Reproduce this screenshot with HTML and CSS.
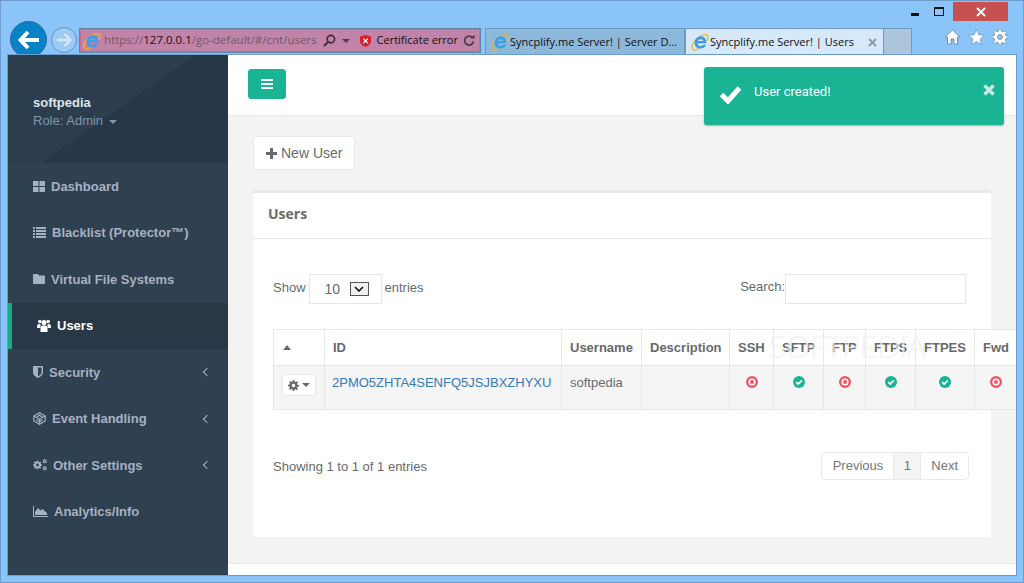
FILE: index.html
```html
<!DOCTYPE html>
<html lang="en">
  <head>
    <meta charset="UTF-8" />
    <title>Syncplify.me Server! | Users</title>
    <link rel="stylesheet" href="styles.css">
  </head>
  <body>
    <svg class="sprites" width="0" height="0">
      <symbol id="ie" viewBox="0 0 20 20">
        <path d="M2 18C-1 15 4 6 13 2.500C17 1 19 2 19 4.500C19 6 18.500 7.500 17.500 9" fill="none" stroke="#f0b429" stroke-width="1.400"/>
        <path d="M2 18C3.500 19.500 7 18.500 9.500 17" fill="none" stroke="#f0b429" stroke-width="1.400"/>
        <path d="M4 10C4.500 6 8 3.500 11 3.500C14.500 3.500 17.500 7 17 11.500H7.500V12.500C8.500 15 12 15.200 13.600 13H16.800C15 17.500 9.500 18.500 6 15.800C4.500 14.500 3.800 12.500 4 10ZM7.600 8.800H13.800C13 6.300 8.500 6.300 7.600 8.800Z" fill="#3a9fe6" fill-rule="evenodd"/>
      </symbol>
      <symbol id="ok" viewBox="0 0 12 12">
        <circle cx="6" cy="6" r="6" fill="#1ab394"/>
        <path d="M3.200 6.200L5.200 8L8.900 4.300" fill="none" stroke="#fff" stroke-width="1.700"/>
      </symbol>
      <symbol id="no" viewBox="0 0 12 12">
        <circle cx="6" cy="6" r="4.800" fill="#fff" stroke="#ed5565" stroke-width="2.400"/>
        <circle cx="6" cy="6" r="2" fill="#ed5565"/>
      </symbol>
      <symbol id="gear" viewBox="0 0 14 14">
        <path d="M6 0H8L8.400 2L9.700 2.600L11.500 1.500L12.800 3L11.600 4.600L12.100 6L14 6.300V8.200L12.100 8.500L11.500 9.900L12.600 11.500L11.200 12.900L9.600 11.700L8.300 12.200L8 14H6L5.700 12.200L4.300 11.600L2.700 12.700L1.300 11.300L2.400 9.700L1.900 8.400L0 8V6L1.900 5.700L2.500 4.300L1.400 2.700L2.800 1.300L4.400 2.400L5.700 1.900ZM7 4.800A2.200 2.200 0 1 0 7 9.200A2.200 2.200 0 1 0 7 4.800Z" fill-rule="evenodd"/>
      </symbol>
    </svg>

    <header class="toolbar">
      <div class="caption-buttons">
        <span class="cap-btn"><i class="cap-min"></i></span>
        <span class="cap-btn"><i class="cap-max"></i></span>
        <span class="cap-btn cap-close">
          <svg width="10" height="10" viewBox="0 0 10 10"><path d="M1 1L9 9M9 1L1 9" stroke="#fff" stroke-width="1.800"/></svg>
        </span>
      </div>
      <div class="nav-row">
        <span class="back-btn">
          <svg width="22" height="20" viewBox="0 0 22 20"><path d="M10 2L2.500 10L10 18M3 10H21" fill="none" stroke="#fff" stroke-width="4"/></svg>
        </span>
        <span class="forward-btn">
          <svg width="16" height="14" viewBox="0 0 16 14"><path d="M8.500 1L14.500 7L8.500 13M14 7H1" fill="none" stroke="#d8e8f6" stroke-width="2.400"/></svg>
        </span>
        <div class="address-bar">
          <svg class="ie-icon" width="18" height="18"><use href="#ie"/></svg>
          <span class="url">https://<b>127.0.0.1</b>/go-default/#/cnt/users</span>
          <svg class="addr-search" width="13" height="13" viewBox="0 0 14 14"><circle cx="8.500" cy="5.500" r="4" fill="none" stroke="#3d2a3a" stroke-width="1.800"/><path d="M5.500 8.500L1 13" stroke="#3d2a3a" stroke-width="2.200"/></svg>
          <span class="addr-caret"></span>
          <svg class="addr-shield" width="11" height="12" viewBox="0 0 11 12"><path d="M5.500 0L11 1.500V6C11 9 8 11 5.500 12C3 11 0 9 0 6V1.500Z" fill="#d6202a"/><path d="M3.300 3.700L7.700 8.100M7.700 3.700L3.300 8.100" stroke="#fff" stroke-width="1.300"/></svg>
          <span class="cert">Certificate error</span>
          <svg class="addr-refresh" width="12" height="13" viewBox="0 0 12 13"><path d="M9.800 4A4.500 4.500 0 1 0 10.500 7.500" fill="none" stroke="#4a3a46" stroke-width="1.700"/><path d="M7.500 4.500H11.500V0.500Z" fill="#4a3a46"/></svg>
        </div>
        <div class="tab">
          <svg width="18" height="18"><use href="#ie"/></svg>
          <span class="tab-title">Syncplify.me Server! | Server D...</span>
        </div>
        <div class="tab tab-active">
          <svg width="18" height="18"><use href="#ie"/></svg>
          <span class="tab-title">Syncplify.me Server! | Users</span>
          <svg class="tab-close" width="9" height="9" viewBox="0 0 9 9"><path d="M1 1L8 8M8 1L1 8" stroke="#8b9aa8" stroke-width="2"/></svg>
        </div>
        <div class="tab-new"></div>
        <div class="tools">
          <svg width="17" height="16" viewBox="0 0 17 16"><path d="M8.500 1L16 8H13.500V15H10V10H7V15H3.500V8H1Z" fill="#fff" stroke="#5e7f9e" stroke-width="0.800"/></svg>
          <svg width="17" height="16" viewBox="0 0 17 16"><path d="M8.500 0.500L10.800 5.800L16.500 6.300L12.200 10L13.500 15.500L8.500 12.600L3.500 15.500L4.800 10L0.500 6.300L6.200 5.800Z" fill="#fff" stroke="#5e7f9e" stroke-width="0.600"/></svg>
          <svg class="tools-gear" width="16" height="16"><use href="#gear"/></svg>
        </div>
      </div>
    </header>

    <div class="window">
      <aside class="sidebar">
        <div class="profile">
          <div class="profile-name">softpedia</div>
          <div class="profile-role">Role: Admin <span class="caret"></span></div>
        </div>
        <nav>
          <a class="nav-item" href="#">
            <svg width="12" height="11" viewBox="0 0 12 11"><path d="M0 0H5.500V5H0ZM6.500 0H12V5H6.500ZM0 6H5.500V11H0ZM6.500 6H12V11H6.500Z"/></svg>
            Dashboard
          </a>
          <a class="nav-item" href="#">
            <svg width="13" height="11" viewBox="0 0 13 11"><path d="M0 0H2V2H0ZM3 0H13V2H3ZM0 3H2V5H0ZM3 3H13V5H3ZM0 6H2V8H0ZM3 6H13V8H3ZM0 9H2V11H0ZM3 9H13V11H3Z"/></svg>
            Blacklist (Protector™)
          </a>
          <a class="nav-item" href="#">
            <svg width="12" height="10" viewBox="0 0 12 10"><path d="M1 0H5L6 1.500H11A1 1 0 0 1 12 2.500V9A1 1 0 0 1 11 10H1A1 1 0 0 1 0 9V1A1 1 0 0 1 1 0Z"/></svg>
            Virtual File Systems
          </a>
          <a class="nav-item nav-active" href="#">
            <svg width="14" height="13" viewBox="0 0 14 13"><circle cx="2.800" cy="2.500" r="1.800"/><circle cx="11.200" cy="2.500" r="1.800"/><circle cx="7" cy="3.500" r="2.500"/><path d="M0 8C0 5.500 1 5 3.500 5L3.300 9H0ZM14 8C14 5.500 13 5 10.500 5L10.700 9H14ZM3.500 13V9C3.500 7 5 6.300 7 6.300C9 6.300 10.500 7 10.500 9V13Z"/></svg>
            Users
          </a>
          <a class="nav-item" href="#">
            <svg width="10" height="12" viewBox="0 0 10 12"><path fill-rule="evenodd" d="M0 0H10V6.500C10 9 7.500 11 5 12C2.500 11 0 9 0 6.500ZM5 1.500V10.300C6.800 9.400 8.500 8 8.500 6.500V1.500Z"/></svg>
            Security
            <span class="chevron"></span>
          </a>
          <a class="nav-item" href="#">
            <svg width="13" height="13" viewBox="0 0 13 13"><path d="M6.500 0.800L12.200 4V9L6.500 12.200L0.800 9V4ZM0.800 4L6.500 7L12.200 4M6.500 7V12.200M3.500 5.500L6.500 3L9.500 5.500M3.500 7.500L6.500 10L9.500 7.500" fill="none" stroke="currentColor" stroke-width="1.200"/></svg>
            Event Handling
            <span class="chevron"></span>
          </a>
          <a class="nav-item" href="#">
            <svg width="14" height="12" viewBox="0 0 14 12"><use href="#gear" width="9" height="9" y="1.500"/><use href="#gear" width="4.500" height="4.500" x="9.500"/><use href="#gear" width="4.500" height="4.500" x="9.500" y="7"/></svg>
            Other Settings
            <span class="chevron"></span>
          </a>
          <a class="nav-item" href="#">
            <svg width="15" height="11" viewBox="0 0 15 11"><path d="M0 0H1V10H15V11H0ZM2 9V6L5 2L7.500 4.500L9.500 3L14 7V9Z"/></svg>
            Analytics/Info
          </a>
        </nav>
      </aside>

      <main class="main">
        <div class="topbar">
          <button class="menu-btn" type="button">
            <svg width="12" height="10" viewBox="0 0 12 10"><path d="M0 0H12V2H0ZM0 4H12V6H0ZM0 8H12V10H0Z" fill="#fff"/></svg>
          </button>
        </div>

        <div class="content">
          <button class="new-user" type="button">
            <svg width="11" height="11" viewBox="0 0 11 11"><path d="M4 0H7V4H11V7H7V11H4V7H0V4H4Z" fill="#676a6c"/></svg>
            New User
          </button>

          <section class="panel">
            <h2 class="panel-title">Users</h2>
            <div class="panel-body">
              <div class="table-tools">
                <div class="length">
                  Show
                  <span class="length-select">10
                    <span class="select-arrow">
                      <svg width="10" height="6" viewBox="0 0 10 6"><path d="M1 1L5 5L9 1" fill="none" stroke="#111" stroke-width="1.600"/></svg>
                    </span>
                  </span>
                  entries
                </div>
                <label class="search">Search:<input type="text" /></label>
              </div>

              <table class="users">
                <thead>
                  <tr>
                    <th class="col-actions"><span class="sort-up"></span></th>
                    <th class="col-id">ID</th>
                    <th class="col-username">Username</th>
                    <th class="col-desc">Description</th>
                    <th class="col-ssh">SSH</th>
                    <th class="col-sftp">SFTP</th>
                    <th class="col-ftp">FTP</th>
                    <th class="col-ftps">FTPS</th>
                    <th class="col-ftpes">FTPES</th>
                    <th class="col-fwd">Fwd</th>
                  </tr>
                </thead>
                <tbody>
                  <tr>
                    <td>
                      <button class="row-menu" type="button">
                        <svg width="11" height="11"><use href="#gear"/></svg>
                        <span class="caret"></span>
                      </button>
                    </td>
                    <td class="cell-id"><a href="#">2PMO5ZHTA4SENFQ5JSJBXZHYXU</a></td>
                    <td>softpedia</td>
                    <td></td>
                    <td class="status"><svg width="12" height="12"><use href="#no"/></svg></td>
                    <td class="status"><svg width="12" height="12"><use href="#ok"/></svg></td>
                    <td class="status"><svg width="12" height="12"><use href="#no"/></svg></td>
                    <td class="status"><svg width="12" height="12"><use href="#ok"/></svg></td>
                    <td class="status"><svg width="12" height="12"><use href="#ok"/></svg></td>
                    <td class="status"><svg width="12" height="12"><use href="#no"/></svg></td>
                  </tr>
                </tbody>
              </table>

              <div class="table-foot">
                <div class="info">Showing 1 to 1 of 1 entries</div>
                <div class="pager">
                  <a class="prev" href="#">Previous</a>
                  <a class="current" href="#">1</a>
                  <a href="#">Next</a>
                </div>
              </div>
            </div>
          </section>
        </div>

        <div class="footer"></div>
      </main>
    </div>

    <!-- toast and watermark sit over the page -->
    <div class="toast">
      <svg class="toast-check" width="23" height="19" viewBox="0 0 23 19"><path d="M2.500 9.500L9 16L20.500 3" fill="none" stroke="#fff" stroke-width="5"/></svg>
      <span class="toast-text">User created!</span>
      <svg class="toast-close" width="12" height="12" viewBox="0 0 12 12"><path d="M1.500 1.500L10.500 10.500M10.500 1.500L1.500 10.500" stroke="#c6ece4" stroke-width="3.400"/></svg>
    </div>
    <div class="watermark">SOFTPEDIA</div>
  </body>
</html>
```

FILE: styles.css
```css
* {
  box-sizing: border-box;
}
html,
body {
  height: 100%;
}
body {
  margin: 0;
  height: 583px;
  overflow: hidden;
  display: flex;
  flex-direction: column;
  background-color: #8ac4f8;
  border: 1px solid #6c9ccb;
  font-family: "Liberation Sans", Arial, sans-serif;
  font-size: 14px;
  color: #676a6c;
  position: relative;
}
svg {
  flex: none;
}
.sprites {
  position: absolute;
}

/* browser chrome */
.toolbar {
  height: 54px;
  flex: none;
  position: relative;
  font-family: "Open Sans", "Noto Sans", sans-serif;
}
.caption-buttons {
  position: absolute;
  top: 1px;
  right: 15px;
  display: flex;
  align-items: stretch;
  height: 19px;
}
.cap-btn {
  width: 29px;
  display: flex;
  align-items: center;
  justify-content: center;
}
.cap-close {
  width: 55px;
  background-color: #c75050;
}
.cap-min {
  display: block;
  width: 8px;
  height: 3px;
  margin: 6px 0 0 11px;
  background-color: #111;
}
.cap-max {
  display: block;
  width: 10px;
  height: 9px;
  border: 1px solid #111;
  border-top-width: 2px;
}
.nav-row {
  position: absolute;
  left: 9px;
  top: 20px;
  right: 0;
  height: 36px;
  display: flex;
  align-items: flex-start;
}
.back-btn {
  width: 37px;
  height: 37px;
  border-radius: 50%;
  background-color: #0583c6;
  border: 1px solid #2a6c9c;
  display: flex;
  align-items: center;
  justify-content: center;
  flex: none;
}
.forward-btn {
  width: 26px;
  height: 26px;
  margin: 6px 2px 0 4px;
  border-radius: 50%;
  border: 1px solid #5f93c0;
  background-color: #9ccbf5;
  display: flex;
  align-items: center;
  justify-content: center;
  flex: none;
}
.address-bar {
  width: 402px;
  height: 25px;
  margin-top: 7px;
  margin-right: 4px;
  flex: none;
  display: flex;
  align-items: center;
  padding: 0 5px 0 3px;
  background-color: #c283a8;
  border: 1px solid #5f86a8;
  box-shadow: inset 0 0 0 1px #d0688f;
  font-size: 11.5px;
  color: #6c5a68;
}
.url {
  margin: 0 0 2px 3px;
  white-space: nowrap;
}
.url b {
  font-weight: 400;
  color: #111;
}
.addr-search {
  margin-left: 6px;
}
.addr-caret {
  margin-left: 6px;
  border-top: 4px solid #4d3d4a;
  border-left: 4px solid transparent;
  border-right: 4px solid transparent;
}
.addr-shield {
  margin-left: 10px;
}
.cert {
  margin: 0 0 2px 6px;
  font-size: 11px;
  color: #111;
  white-space: nowrap;
}
.addr-refresh {
  margin-left: auto;
}
.tab {
  width: 200px;
  height: 27px;
  margin-top: 7px;
  flex: none;
  display: flex;
  align-items: center;
  gap: 1px;
  padding-left: 5px;
  background-color: #8cb8dc;
  border: 1px solid #6a9bc4;
  border-bottom: none;
  font-size: 11px;
  color: #111;
  white-space: nowrap;
}
.tab-title {
  margin-bottom: 2px;
}
.tab-active {
  width: 199px;
  background-color: #d6e9fb;
}
.tab-close {
  margin-left: auto;
  margin-right: 6px;
}
.tab-new {
  width: 28px;
  height: 27px;
  margin-top: 7px;
  flex: none;
  background-color: #adc5dc;
  border: 1px solid #6a9bc4;
  border-left: none;
  border-bottom: none;
}
.tools {
  display: flex;
  gap: 7px;
  margin: 8px 0 0 32px;
  align-items: center;
}
.tools-gear {
  fill: #fff;
  stroke: #5e7f9e;
  stroke-width: 0.6px;
}

/* page */
.window {
  width: 1008px;
  height: 520px;
  margin-left: 7px;
  flex: none;
  display: flex;
  background-color: #fff;
  outline: 1px solid #6c9ccb;
  overflow: hidden;
  position: relative;
  z-index: 3;
}
.sidebar {
  width: 220px;
  flex: none;
  background-color: #2f4050;
  display: flex;
  flex-direction: column;
}
.profile {
  height: 108px;
  padding: 40px 25px 0;
  background-color: #293a4a;
  background-image: linear-gradient(145deg, #2c3e4e 0, #2c3e4e 50%, #263747 50%, #263747 100%);
}
.profile-name {
  font-size: 13px;
  font-weight: 700;
  color: #dfe4ed;
  line-height: 15px;
}
.profile-role {
  margin-top: 3px;
  font-size: 13px;
  line-height: 15px;
  color: #8095a8;
}
.caret {
  display: inline-block;
  vertical-align: middle;
  border-top: 4px solid currentColor;
  border-left: 4px solid transparent;
  border-right: 4px solid transparent;
  margin-left: 2px;
}
.nav-item {
  height: 46.5px;
  padding: 0 18px 0 25px;
  display: flex;
  align-items: center;
  gap: 6px;
  font-size: 13px;
  font-weight: 700;
  color: #a7b1c2;
  text-decoration: none;
}
.nav-item svg {
  fill: currentColor;
}
.nav-active {
  background-color: #293846;
  border-left: 4px solid #19aa8d;
  color: #fff;
}
.chevron {
  width: 6px;
  height: 6px;
  margin-left: auto;
  border-left: 1px solid #a7b1c2;
  border-bottom: 1px solid #a7b1c2;
  transform: rotate(45deg);
}
.main {
  width: 788px;
  flex: none;
  display: flex;
  flex-direction: column;
  background-color: #f3f3f4;
}
.topbar {
  height: 61px;
  flex: none;
  padding: 14px 20px;
  background-color: #fff;
  border-bottom: 1px solid #e7eaec;
}
.menu-btn {
  width: 38px;
  height: 30px;
  padding: 0;
  border: 1px solid #1ab394;
  border-radius: 3px;
  background-color: #1ab394;
  display: flex;
  align-items: center;
  justify-content: center;
}
.content {
  flex: 1;
  padding: 20px 25px 0;
}
.new-user {
  width: 102px;
  height: 34px;
  padding: 0 0 0 12px;
  border: 1px solid #e7eaec;
  border-radius: 3px;
  background-color: #fff;
  display: flex;
  align-items: center;
  gap: 4px;
  font-family: inherit;
  font-size: 14px;
  color: #676a6c;
}
.panel {
  width: 738px;
  height: 347px;
  margin-top: 20px;
  background-color: #fff;
  border-top: 3px solid #e7eaec;
}
.panel-title {
  height: 46px;
  margin: 0;
  padding: 13px 15px 0;
  border-bottom: 1px solid #e7eaec;
  font-family: "Open Sans", sans-serif;
  font-size: 14px;
  font-weight: 700;
  line-height: 16px;
}
.panel-body {
  padding: 35px 25px 0 20px;
}
.table-tools {
  height: 30px;
  display: flex;
  justify-content: space-between;
  align-items: center;
  font-size: 13px;
}
.length {
  display: flex;
  align-items: center;
  gap: 3px;
  margin-top: -3px;
}
.length-select {
  width: 73px;
  height: 30px;
  margin: 3px 0 0;
  padding: 0 12px 0 15px;
  border: 1px solid #e5e6e7;
  display: flex;
  align-items: center;
  justify-content: space-between;
  font-size: 14px;
}
.select-arrow {
  width: 19px;
  height: 14px;
  border: 1px solid #555;
  background-color: #f0f0f0;
  display: flex;
  align-items: center;
  justify-content: center;
}
.search {
  display: flex;
  align-items: flex-start;
  height: 30px;
  line-height: 26px;
}
.search input {
  width: 181px;
  height: 30px;
  padding: 0 12px;
  border: 1px solid #e5e6e7;
  background-color: #fff;
}
.users {
  width: 743px;
  margin-top: 25px;
  table-layout: fixed;
  border-collapse: collapse;
  font-size: 13px;
}
.users th,
.users td {
  border: 1px solid #e7e7e7;
  text-align: left;
  padding: 8px;
}
.users th {
  height: 36px;
  padding-top: 8px;
  background-color: #fff;
  font-weight: 700;
  white-space: nowrap;
  overflow: hidden;
}
.users td {
  height: 44px;
  padding-top: 9px;
  vertical-align: top;
  background-color: #f5f5f6;
}
.users .cell-id {
  padding-left: 7px;
}
.users a {
  color: #337ab7;
  text-decoration: none;
}
.col-actions { width: 51px; }
.col-id { width: 237px; }
.col-username { width: 80px; }
.col-desc { width: 88px; }
.col-ssh { width: 44px; }
.col-sftp { width: 50px; }
.col-ftp { width: 42px; }
.col-ftps { width: 50px; }
.col-ftpes { width: 59px; }
.col-fwd { width: 42px; }
.users .status {
  text-align: center;
  padding: 10px 0 0;
}
.sort-up {
  display: block;
  width: 0;
  margin-left: 1px;
  border-bottom: 5px solid #676a6c;
  border-left: 4px solid transparent;
  border-right: 4px solid transparent;
}
.row-menu {
  width: 34px;
  height: 22px;
  margin-top: -1px;
  padding: 0;
  border: 1px solid #e7eaec;
  border-radius: 3px;
  background-color: #fff;
  display: flex;
  align-items: center;
  justify-content: center;
  gap: 1px;
  color: #676a6c;
  fill: #676a6c;
}
.table-foot {
  display: flex;
  justify-content: space-between;
  align-items: center;
  margin: 41px -3px 0 0;
  font-size: 13px;
  height: 30px;
}
.pager {
  display: flex;
  height: 28px;
  border: 1px solid #e7eaec;
  border-radius: 4px;
}
.pager a {
  padding: 0 10px;
  line-height: 25px;
  color: #777;
  text-decoration: none;
}
.pager .prev {
  padding: 0 10px 0 11px;
}
.pager .current {
  width: 28px;
  padding: 0;
  text-align: center;
  background-color: #f4f4f4;
  border-left: 1px solid #e7eaec;
  border-right: 1px solid #e7eaec;
}
.footer {
  height: 12px;
  flex: none;
  background-color: #fff;
  border-top: 1px solid #e7eaec;
}

/* overlays */
.toast {
  position: absolute;
  left: 703px;
  top: 66px;
  width: 300px;
  height: 58px;
  border-radius: 3px;
  background-color: #1ab394;
  box-shadow: 0 1px 2px rgba(0, 0, 0, 0.3);
  color: #fff;
  z-index: 5;
}
.toast-check {
  position: absolute;
  left: 15px;
  top: 18px;
}
.toast-text {
  position: absolute;
  left: 50px;
  top: 16px;
  font-family: Roboto, sans-serif;
  font-size: 13px;
  line-height: 18px;
}
.toast-close {
  position: absolute;
  left: 279px;
  top: 17px;
}
.watermark {
  position: absolute;
  left: 768px;
  top: 323px;
  font-family: "Open Sans", sans-serif;
  font-size: 32px;
  font-weight: 300;
  letter-spacing: -0.5px;
  color: rgba(255, 255, 255, 0.6);
  text-shadow: 0 0 1px rgba(190, 190, 190, 0.4);
  z-index: 5;
}
```
